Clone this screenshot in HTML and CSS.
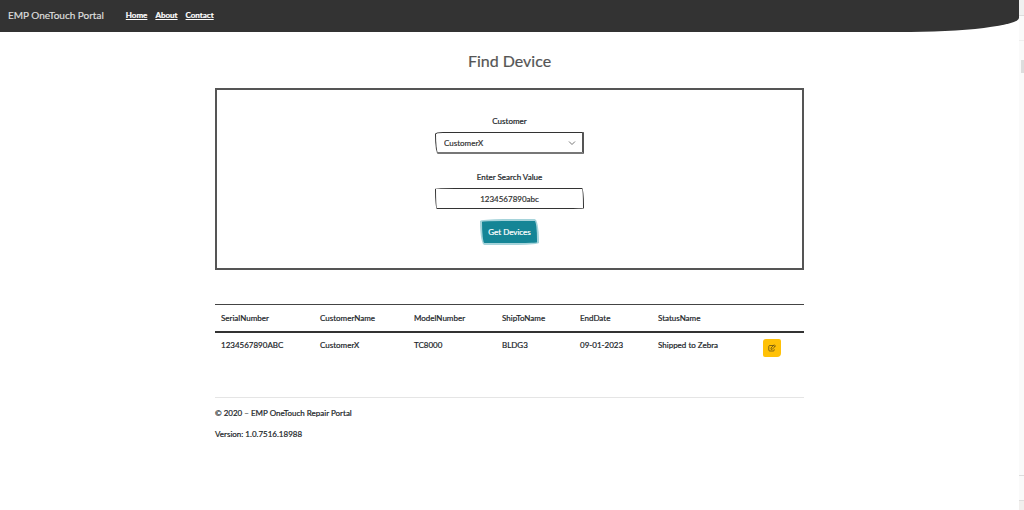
FILE: index.html
```html
<!DOCTYPE html>
<html lang="en">
<head>
<meta charset="utf-8">
<title>Find Device - EMP OneTouch Portal</title>
<link rel="stylesheet" href="styles.css">
</head>
<body>
<div class="page">
  <header class="navbar">
    <a class="brand" href="#">EMP OneTouch Portal</a>
    <nav class="nav-links">
      <a href="#">Home</a>
      <a href="#">About</a>
      <a href="#">Contact</a>
    </nav>
  </header>
  <div class="container">
    <main>
      <h1>Find Device</h1>
      <form class="search-box">
        <label for="customer">Customer</label>
        <div class="select-wrap">
          <select id="customer" class="control"><option>CustomerX</option></select>
          <svg class="chevron" viewBox="0 0 8 6" aria-hidden="true"><path d="M1 1.500 4 4.500 7 1.500"/></svg>
        </div>
        <label for="search">Enter Search Value</label>
        <input id="search" class="control search-input" type="text" value="1234567890abc">
        <button class="submit" type="button">Get Devices</button>
      </form>
      <table class="devices">
        <colgroup>
          <col class="col-serial"><col class="col-customer"><col class="col-model"><col class="col-ship"><col class="col-date"><col class="col-status"><col>
        </colgroup>
        <thead>
          <tr><th>SerialNumber</th><th>CustomerName</th><th>ModelNumber</th><th>ShipToName</th><th>EndDate</th><th>StatusName</th><th></th></tr>
        </thead>
        <tbody>
          <tr>
            <td>1234567890ABC</td><td>CustomerX</td><td>TC8000</td><td>BLDG3</td><td>09-01-2023</td><td>Shipped to Zebra</td>
            <td>
              <button class="edit" type="button" aria-label="Edit">
                <svg viewBox="0 0 16 16" aria-hidden="true"><path d="M10 3H3.500Q1.500 3 1.500 5V12Q1.500 14 3.500 14H10.500Q12.500 14 12.500 12V10.500"/><path d="M6 10.500V8L12.500 1.500 15 4 8.500 10.500ZM11 3 13.500 5.500"/></svg>
              </button>
            </td>
          </tr>
        </tbody>
      </table>
    </main>
    <footer>
      <p>© 2020 – EMP OneTouch Repair Portal</p>
      <p>Version: 1.0.7516.18988</p>
    </footer>
  </div>
</div>
<aside class="edge">
  <div class="edge-top"></div>
  <div class="edge-bar"></div>
  <div class="edge-thumb"></div>
  <div class="edge-panel"></div>
  <div class="edge-end"></div>
</aside>
</body>
</html>
```
FILE: styles.css
```css
* { box-sizing: border-box; }

body {
  margin: 0;
  min-height: 100vh;
  display: flex;
  background: #fff;
  color: #212529;
  font: 8px/12px "Lato", sans-serif;
  -webkit-text-stroke: 0.2px;
}

.page { flex: 1; }

.navbar {
  display: flex;
  align-items: center;
  gap: 22px;
  height: 32px;
  padding: 0 8px 2px;
  background: #333;
  border-radius: 0 0 120px 0 / 0 0 14px 0;
}

.navbar a { color: #fff; }

.navbar .brand {
  color: #ddd;
  font: 10px/16px "Lato", sans-serif;
  text-decoration: none;
}

.nav-links { display: flex; gap: 8px; font-weight: bold; }

.container {
  width: 100%;
  max-width: 589px;
  margin: 0 auto;
}

h1 {
  margin: 18px 0 16px;
  color: #555;
  font: 16px/22px "Lato", sans-serif;
  text-align: center;
}

.search-box {
  display: flex;
  flex-direction: column;
  align-items: center;
  padding: 25px 16px;
  border: 2px solid #555;
}

.search-box label { margin-bottom: 5px; }

.select-wrap {
  position: relative;
  width: 149px;
  margin-bottom: 17px;
}

.control {
  display: block;
  width: 149px;
  height: 22px;
  padding: 0 8px;
  appearance: none;
  border: 1px solid #333;
  background: #fff;
  color: #333;
  font: inherit;
  outline: none;
}

.select-wrap .control {
  border-width: 1px 2px 2px 1px;
  border-color: #333 #555 #777 #333;
  border-radius: 8px 0 0 3px / 2px 0 0 20px;
}

.chevron {
  position: absolute;
  top: 8px;
  right: 8px;
  width: 8px;
  height: 6px;
  fill: none;
  stroke: #777;
}

.search-input {
  height: 21px;
  border-radius: 100px 10px 90px 10px / 5px 90px 4px 100px;
  text-align: center;
}

.submit {
  height: 22px;
  margin: 12px 0 0;
  padding: 0 6px;
  border: 0;
  border-radius: 90px 10px 80px 10px / 3px 80px 3px 90px;
  background: #158596;
  box-shadow: 0 0 0 2px #a5d3da;
  color: #fff;
  font: inherit;
}

.devices {
  width: 100%;
  margin-top: 34px;
  border-collapse: collapse;
  table-layout: fixed;
}

.col-serial { width: 99px; }
.col-customer { width: 94px; }
.col-model { width: 88px; }
.col-ship { width: 78px; }
.col-date { width: 78px; }
.col-status { width: 105px; }

.devices th,
.devices td {
  padding: 6px;
  text-align: left;
  vertical-align: top;
  font-weight: normal;
}

.devices th {
  padding: 7px 6px;
  border-top: 1px solid #444;
  border-bottom: 2px solid #333;
}

.edit {
  display: grid;
  place-items: center;
  width: 18px;
  height: 18px;
  padding: 0;
  border: 0;
  border-radius: 3px 2px 4px 2px;
  background: #ffc107;
}

.edit svg {
  width: 8px;
  height: 8px;
  fill: none;
  stroke: #5c4a16;
  stroke-width: 1.5;
}

footer {
  margin-top: 34px;
  padding-top: 9px;
  border-top: 1px solid #e5e5e5;
}

footer p { margin: 0 0 9px; }

.edge {
  display: flex;
  flex-direction: column;
  width: 5px;
  background: #fafafa;
}

.edge-top { height: 16px; background: #f0f0f0; border-bottom: 1px solid #ddd; }
.edge-bar { height: 25px; border-bottom: 1px solid #eee; }
.edge-thumb { width: 3px; height: 13px; margin: 19px 0 0 2px; background: #ddd; }
.edge-panel { flex: 1; border-bottom: 1px solid #ddd; }
.edge-end { height: 34px; border-bottom: 9px solid #f1efed; box-shadow: inset 0 -1px #ddd; }
```
